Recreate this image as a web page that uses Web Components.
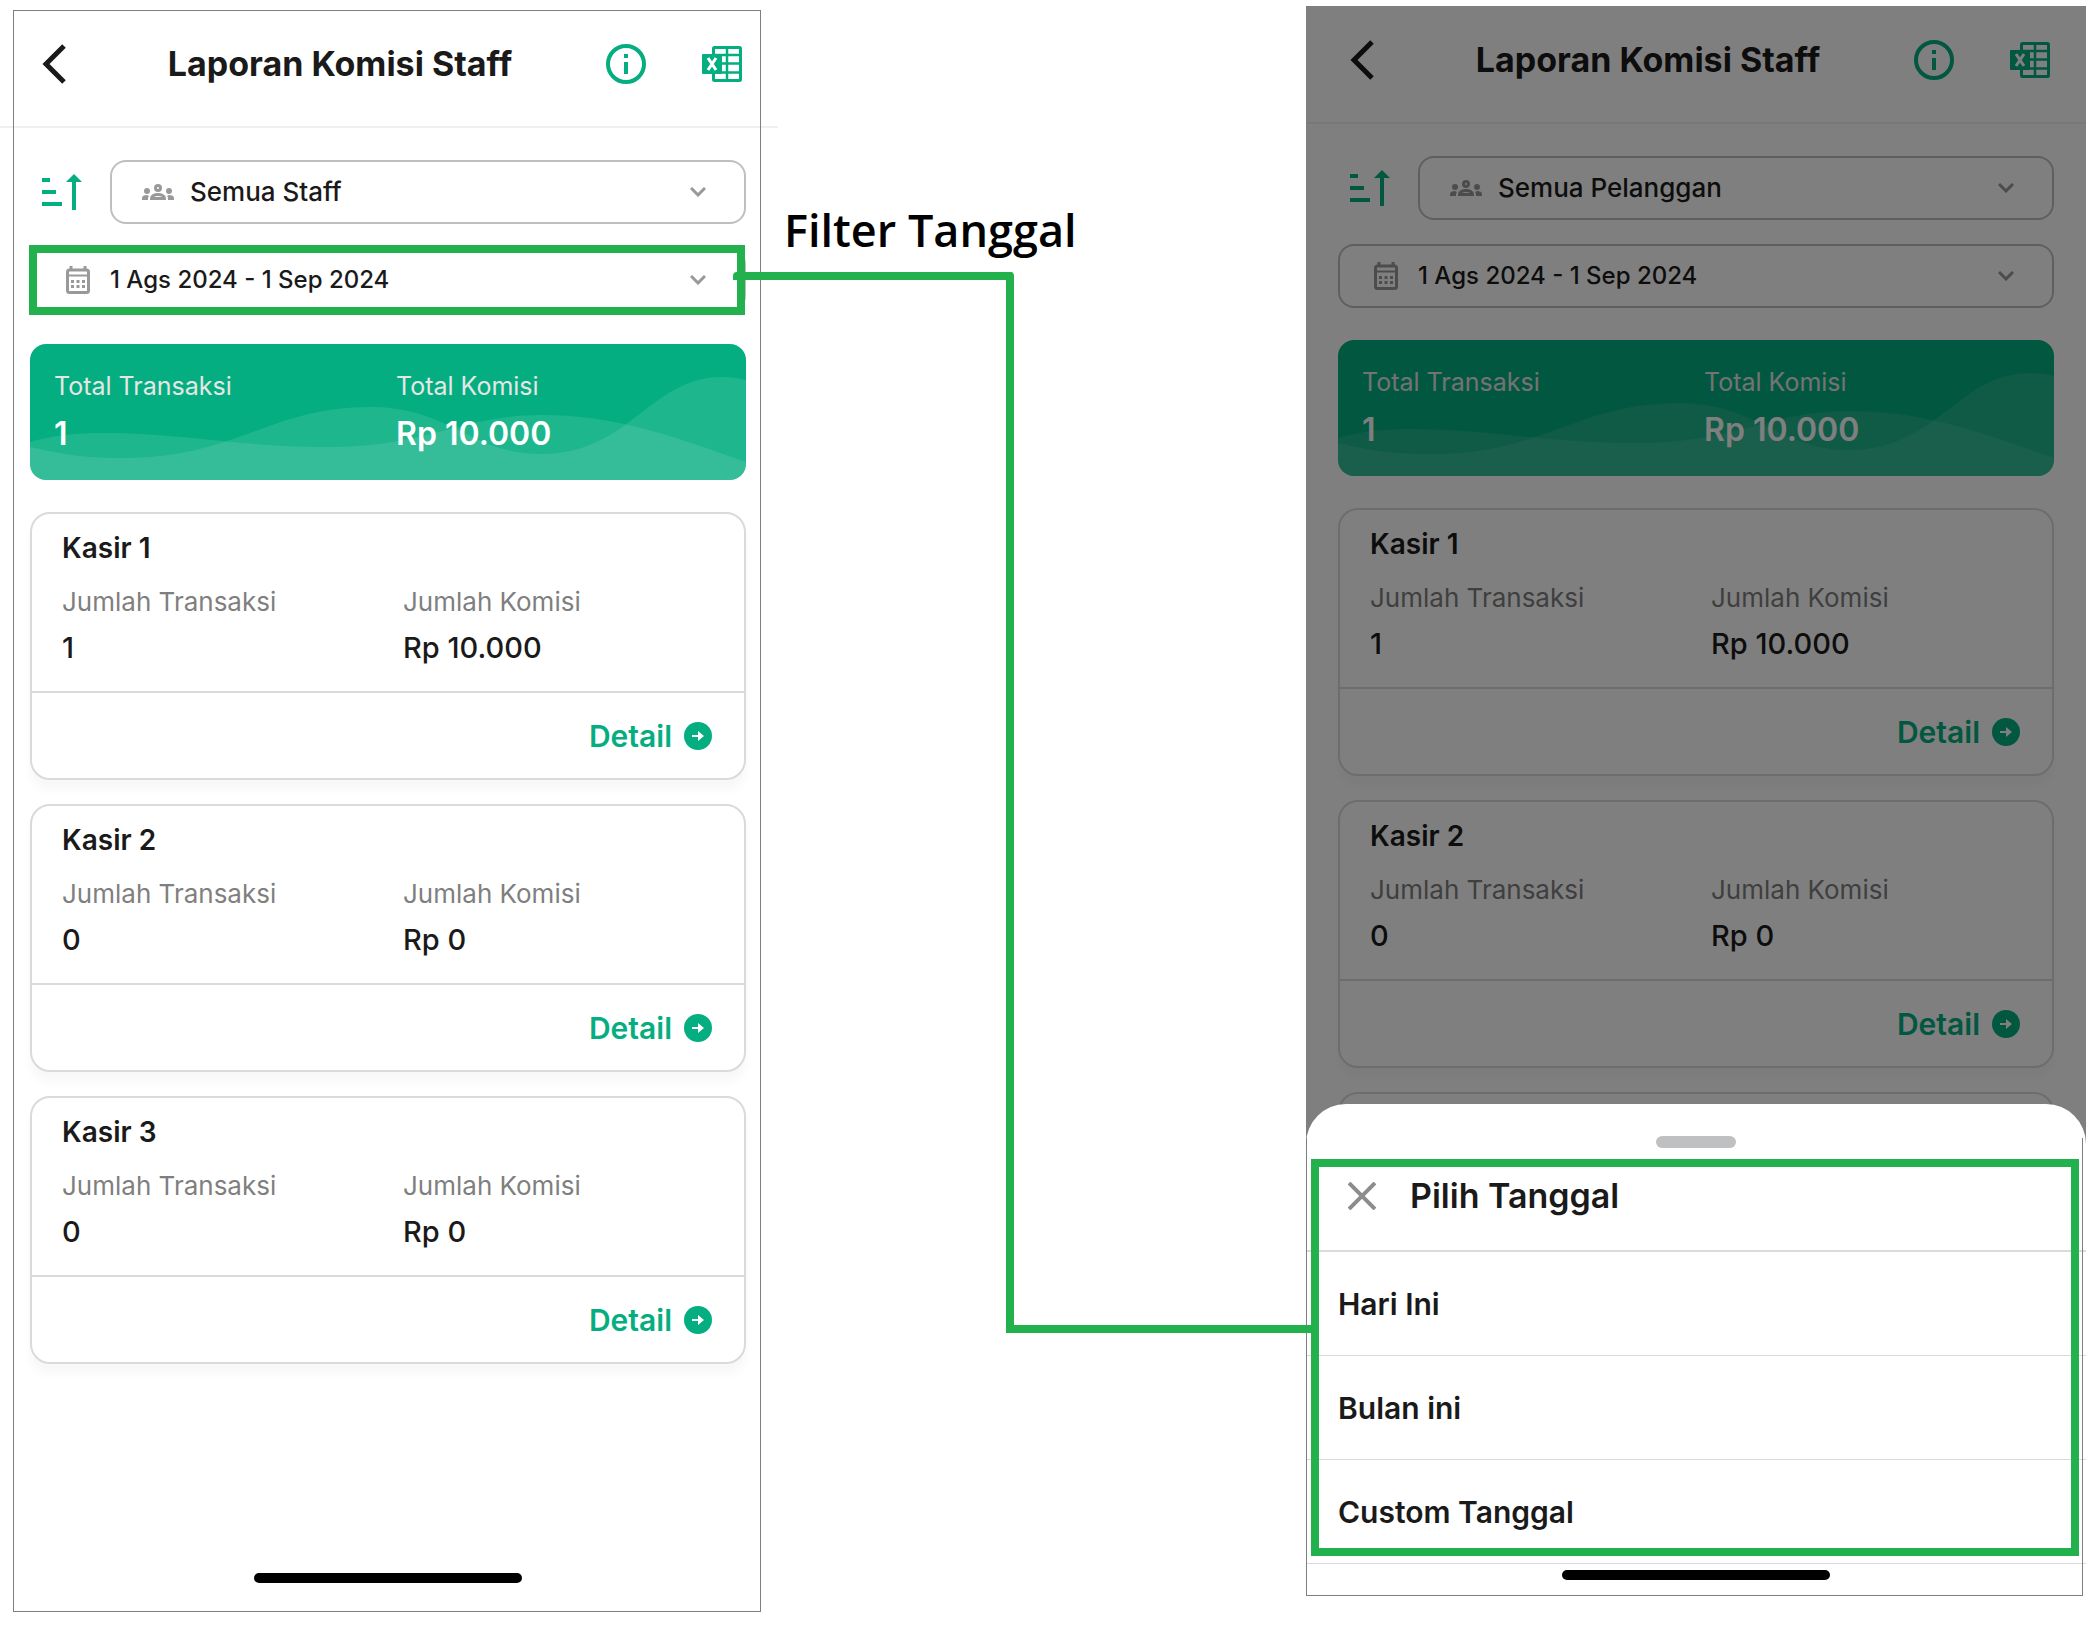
<!DOCTYPE html>
<html lang="id">
<head>
<meta charset="UTF-8">
<meta name="viewport" content="width=device-width, initial-scale=1">
<title>Laporan Komisi Staff</title>
<style>
    :root {
        --green: #05ae80;
        --marker: #22b14c;
        --ink: #1a1a1a;
        --muted: #7f7f7f;
        --icon: #999999;
        --line: #dadada;
        --field-line: #bfbfbf;
    }
    body {
        margin: 0;
        background: #fff;
        color: var(--ink);
        font-family: Inter, "Open Sans", sans-serif;
        overflow-x: hidden;
    }
</style>
</head>
<body>
<guide-board>
    <phone-screen class="before">
        <app-header heading="Laporan Komisi Staff"></app-header>
        <report-view staff="Semua Staff" date="1 Ags 2024 - 1 Sep 2024" marked>
            <staff-card name="Kasir 1" count="1" total="Rp 10.000"></staff-card>
            <staff-card name="Kasir 2" count="0" total="Rp 0"></staff-card>
            <staff-card name="Kasir 3" count="0" total="Rp 0"></staff-card>
        </report-view>
        <home-bar slot="bottom"></home-bar>
    </phone-screen>
    <guide-link>Filter Tanggal</guide-link>
    <phone-screen class="after" dimmed>
        <app-header heading="Laporan Komisi Staff"></app-header>
        <report-view staff="Semua Pelanggan" date="1 Ags 2024 - 1 Sep 2024">
            <staff-card name="Kasir 1" count="1" total="Rp 10.000"></staff-card>
            <staff-card name="Kasir 2" count="0" total="Rp 0"></staff-card>
            <staff-card></staff-card>
        </report-view>
        <date-sheet slot="sheet" heading="Pilih Tanggal">
            <sheet-option>Hari Ini</sheet-option>
            <sheet-option>Bulan ini</sheet-option>
            <sheet-option>Custom Tanggal</sheet-option>
        </date-sheet>
    </phone-screen>
</guide-board>

<script>
const ICONS = {
    back: [24, 40, `<path d="M22 2 4 20l18 18" fill="none" stroke="currentColor" stroke-width="5"/>`],
    info: [40, 40, `<circle cx="20" cy="20" r="18" fill="none" stroke="currentColor" stroke-width="4"/>
        <path d="M18 10h4v4h-4zM18 18h4v12h-4z" fill="currentColor"/>`],
    excel: [40, 36, `<rect x="11.5" y="1.5" width="27" height="33" rx="1" fill="none" stroke="currentColor" stroke-width="3"/>
        <path d="M25 1v34M11 9h28M11 17.5h28M11 26.5h28" stroke="currentColor" stroke-width="2.5"/>
        <rect y="8" width="20" height="20" rx="1" fill="currentColor"/>
        <path d="M6 12l8 12M14 12 6 24" stroke="#fff" stroke-width="3"/>`],
    sort: [40, 36, `<path d="M0 4h8v4H0zM0 16h14v4H0zM0 28h20v4H0zM30 8h4v28h-4zM24 8l8-8 8 8z" fill="currentColor"/>`],
    people: [32, 16, `<g fill="currentColor"><circle cx="5" cy="7" r="3"/><circle cx="27" cy="7" r="3"/>
        <path d="M0 16v-2c0-2 2-3 5-3l2 1c-1 1-1 2-1 4zM32 16v-2c0-2-2-3-5-3l-2 1c1 1 1 2 1 4z"/></g>
        <g fill="none" stroke="currentColor" stroke-width="3"><circle cx="16" cy="4" r="2.5"/>
        <path d="M9.5 14.5c0-2.500 3-4 6.500-4s6.500 1.500 6.500 4z"/></g>`],
    calendar: [24, 28, `<path d="M5 0v4M19 0v4" stroke="currentColor" stroke-width="3"/>
        <rect x="1.500" y="4" width="21" height="22.500" rx="2" fill="none" stroke="currentColor" stroke-width="3"/>
        <path d="M1 9.500h22" stroke="currentColor" stroke-width="2"/>
        <path d="M5 15.500h14M5 20.500h14" stroke="currentColor" stroke-width="3" stroke-dasharray="3 2.500"/>`],
    chevron: [16, 10, `<path d="M1 1l7 7 7-7" fill="none" stroke="currentColor" stroke-width="3"/>`],
    arrow: [28, 28, `<circle cx="14" cy="14" r="14" fill="currentColor"/>
        <path d="M8 13h6V9l6 5-6 5v-4H8z" fill="#fff"/>`],
    close: [28, 28, `<path d="M1 1l26 26M27 1 1 27" stroke="currentColor" stroke-width="4"/>`]
};

class AppIcon extends HTMLElement {
    constructor() {
        super();
        this.attachShadow({ mode: "open" });
    }

    connectedCallback() {
        const [w, h, body] = ICONS[this.getAttribute("name")];
        this.shadowRoot.innerHTML = `
        <style>
            :host { display: inline-flex; flex: none; }
            svg { display: block; }
        </style>
        <svg width="${w}" height="${h}" viewBox="0 0 ${w} ${h}" aria-hidden="true">${body}</svg>
        `;
    }
}

class GuideBoard extends HTMLElement {
    constructor() {
        super();
        this.attachShadow({ mode: "open" });
        this.shadowRoot.innerHTML = `
        <style>
            :host {
                display: grid;
                grid-template-columns: 390fr 264fr 390fr;
                min-height: 100vh;
                margin-left: -2px;
                padding-right: 14px;
            }
            ::slotted(.before) {
                --header-top: 44px;
                --frame: 10px 17px 0 15px;
                margin-bottom: 17px;
            }
            ::slotted(.after) {
                --header-top: 34px;
                --frame: 0 3px 0 0;
                margin: 6px 0 33px;
            }
        </style>
        <slot></slot>
        `;
    }
}

class PhoneScreen extends HTMLElement {
    constructor() {
        super();
        this.attachShadow({ mode: "open" });
        this.shadowRoot.innerHTML = `
        <style>
            :host {
                display: flex;
                flex-direction: column;
                position: relative;
                min-width: 0;
            }
            .bottom {
                margin-top: auto;
                padding-bottom: 29px;
            }
            :host([dimmed]) .bottom { display: none; }
            .dim { display: none; }
            :host([dimmed]) .dim {
                display: block;
                position: absolute;
                inset: 0 0 400px;
                background: rgba(0, 0, 0, .5);
            }
            .sheet {
                position: absolute;
                inset: auto 0 0;
            }
            .frame {
                position: absolute;
                inset: var(--frame);
                border: 1px solid var(--muted);
                pointer-events: none;
            }
        </style>
        <slot></slot>
        <div class="bottom"><slot name="bottom"></slot></div>
        <div class="dim"></div>
        <div class="frame"></div>
        <div class="sheet"><slot name="sheet"></slot></div>
        `;
    }
}

class AppHeader extends HTMLElement {
    constructor() {
        super();
        this.attachShadow({ mode: "open" });
        this.shadowRoot.innerHTML = `
        <style>
            :host {
                display: flex;
                align-items: center;
                padding: var(--header-top) 36px 42px 44px;
                border-bottom: 2px solid #f0f0f0;
            }
            button {
                display: flex;
                align-items: center;
                height: 40px;
                padding: 0;
                border: 0;
                background: none;
                color: var(--green);
            }
            .back {
                width: 32px;
                color: var(--ink);
            }
            h1 {
                flex: 1;
                margin: 0;
                font-size: 34px;
                font-weight: 700;
                line-height: 40px;
                text-align: center;
            }
            .info { margin-right: 56px; }
        </style>
        <button class="back" aria-label="Kembali"><app-icon name="back"></app-icon></button>
        <h1></h1>
        <button class="info" aria-label="Info"><app-icon name="info"></app-icon></button>
        <button aria-label="Unduh Excel"><app-icon name="excel"></app-icon></button>
        `;
    }

    connectedCallback() {
        this.shadowRoot.querySelector("h1").textContent = this.getAttribute("heading");
    }
}

class SelectField extends HTMLElement {
    constructor() {
        super();
        this.attachShadow({ mode: "open" });
    }

    connectedCallback() {
        this.shadowRoot.innerHTML = `
        <style>
            :host {
                display: block;
                flex: 1;
                position: relative;
            }
            label {
                display: flex;
                align-items: center;
                gap: 16px;
                height: 60px;
                padding: 0 38px 0 30px;
                border: 2px solid var(--field-line);
                border-radius: 16px;
                color: var(--icon);
            }
            .lead {
                display: flex;
                justify-content: center;
                width: 32px;
            }
            select {
                flex: 1;
                min-width: 0;
                padding: 0;
                border: 0;
                appearance: none;
                background: none;
                color: var(--ink);
                font: 500 var(--field-size, 26px)/32px Inter, "Open Sans", sans-serif;
            }
            /* green guide box drawn over the field */
            :host([marked])::after {
                content: "";
                position: absolute;
                inset: -3px 1px -3px -1px;
                border: 8px solid var(--marker);
                pointer-events: none;
            }
        </style>
        <label>
            <span class="lead"><app-icon name="${this.getAttribute("icon")}"></app-icon></span>
            <select aria-label="${this.getAttribute("label")}"><option>${this.getAttribute("value")}</option></select>
            <app-icon name="chevron"></app-icon>
        </label>
        `;
    }
}

class SummaryBanner extends HTMLElement {
    constructor() {
        super();
        this.attachShadow({ mode: "open" });
        this.shadowRoot.innerHTML = `
        <style>
            :host {
                display: block;
                position: relative;
                overflow: hidden;
                border-radius: 16px;
                background: var(--green);
                color: #fff;
            }
            svg {
                position: absolute;
                inset: 0;
                width: 100%;
                height: 100%;
            }
            dl {
                display: grid;
                grid-template-columns: 1fr 1fr;
                position: relative;
                margin: 0;
                padding: 26px 8px 28px 24px;
            }
            dt {
                margin-bottom: 14px;
                color: #e6e6e6;
                font-size: 25px;
                line-height: 32px;
            }
            dd {
                margin: 0;
                font-size: 32px;
                font-weight: 600;
                line-height: 36px;
            }
        </style>
        <svg viewBox="0 0 716 136" preserveAspectRatio="none" fill="#fff" fill-opacity=".1" aria-hidden="true">
            <path d="M0 103C40 112 60 114 95 114C205 114 240 63 340 63C420 63 440 110 511 110C600 110 620 33 692 33Q706 33 716 36V136H0z"/>
            <path d="M0 98C25 91 45 89 75 89C150 89 210 103 297 103C400 103 430 71 511 71C590 71 650 95 716 118V136H0z"/>
        </svg>
        <dl>
            <div><dt>Total Transaksi</dt><dd>1</dd></div>
            <div><dt>Total Komisi</dt><dd>Rp 10.000</dd></div>
        </dl>
        `;
    }
}

class StaffCard extends HTMLElement {
    constructor() {
        super();
        this.attachShadow({ mode: "open" });
    }

    connectedCallback() {
        const style = `
        <style>
            :host {
                display: block;
                min-height: 80px;
                border: 2px solid var(--line);
                border-radius: 20px;
                box-shadow: 0 10px 10px rgba(0, 0, 0, .03);
            }
            h2 {
                margin: 0;
                padding: 18px 30px 22px;
                font-size: 28px;
                font-weight: 600;
                line-height: 32px;
            }
            dl {
                display: grid;
                grid-template-columns: 1fr 1fr;
                margin: 0;
                padding: 0 0 27px 30px;
                border-bottom: 2px solid var(--line);
                line-height: 32px;
            }
            dt {
                margin-bottom: 14px;
                color: var(--muted);
                font-size: 26px;
            }
            dd {
                margin: 0;
                font-size: 29px;
                font-weight: 500;
            }
            a {
                display: flex;
                align-items: center;
                justify-content: flex-end;
                gap: 12px;
                height: 85px;
                padding-right: 32px;
                color: var(--green);
                font-size: 30px;
                font-weight: 600;
                text-decoration: none;
            }
        </style>
        `;

        // a card without a name is an empty placeholder
        if (!this.hasAttribute("name")) {
            this.shadowRoot.innerHTML = style;
            return;
        }

        this.shadowRoot.innerHTML = `${style}
        <h2>${this.getAttribute("name")}</h2>
        <dl>
            <div><dt>Jumlah Transaksi</dt><dd>${this.getAttribute("count")}</dd></div>
            <div><dt>Jumlah Komisi</dt><dd>${this.getAttribute("total")}</dd></div>
        </dl>
        <a href="#">Detail<app-icon name="arrow"></app-icon></a>
        `;
    }
}

class ReportView extends HTMLElement {
    constructor() {
        super();
        this.attachShadow({ mode: "open" });
    }

    connectedCallback() {
        const marked = this.hasAttribute("marked") ? "marked" : "";
        this.shadowRoot.innerHTML = `
        <style>
            :host {
                display: flex;
                flex-direction: column;
                gap: 24px;
                padding: 32px 32px 0;
            }
            .row {
                display: flex;
                align-items: center;
                gap: 28px;
            }
            .row button {
                display: flex;
                padding: 0 0 0 12px;
                border: 0;
                background: none;
                color: var(--green);
            }
            .date {
                --field-size: 24px;
                display: flex;
            }
            summary-banner { margin: 8px 0; }
        </style>
        <div class="row">
            <button aria-label="Urutkan"><app-icon name="sort"></app-icon></button>
            <select-field icon="people" label="Staff" value="${this.getAttribute("staff")}"></select-field>
        </div>
        <div class="date">
            <select-field icon="calendar" label="Tanggal" value="${this.getAttribute("date")}" ${marked}></select-field>
        </div>
        <summary-banner></summary-banner>
        <slot></slot>
        `;
    }
}

class HomeBar extends HTMLElement {
    constructor() {
        super();
        this.attachShadow({ mode: "open" });
        this.shadowRoot.innerHTML = `
        <style>
            :host {
                display: block;
                width: 268px;
                height: 10px;
                margin: 0 auto;
                border-radius: 5px;
                background: #000;
            }
        </style>
        `;
    }
}

class SheetOption extends HTMLElement {
    constructor() {
        super();
        this.attachShadow({ mode: "open" });
        this.shadowRoot.innerHTML = `
        <style>
            :host {
                display: block;
                border-bottom: 1px solid var(--line);
            }
            button {
                width: 100%;
                height: 103px;
                padding: 0 32px;
                border: 0;
                background: none;
                color: var(--ink);
                font: 600 30px/32px Inter, "Open Sans", sans-serif;
                text-align: left;
            }
        </style>
        <button><slot></slot></button>
        `;
    }
}

class DateSheet extends HTMLElement {
    constructor() {
        super();
        this.attachShadow({ mode: "open" });
        this.shadowRoot.innerHTML = `
        <style>
            :host {
                display: block;
                position: relative;
                padding: 32px 0 16px;
                border-radius: 40px 40px 0 0;
                background: #fff;
            }
            .grip {
                width: 80px;
                height: 12px;
                margin: 0 auto;
                border-radius: 6px;
                background: #bfc0c2;
            }
            header {
                display: flex;
                align-items: center;
                gap: 34px;
                padding: 28px 42px 34px;
                border-bottom: 2px solid var(--line);
            }
            header button {
                display: flex;
                padding: 0;
                border: 0;
                background: none;
                color: #8c8c8c;
            }
            h2 {
                margin: 0;
                font-size: 34px;
                font-weight: 600;
                line-height: 40px;
            }
            home-bar { margin-top: 6px; }
            .edge {
                position: absolute;
                inset: 34px 3px 0 0;
                border: 1px solid var(--muted);
                border-top: 0;
            }
            .marker {
                position: absolute;
                inset: 55px 7px 40px 5px;
                border: 8px solid var(--marker);
            }
            .edge, .marker { pointer-events: none; }
        </style>
        <div class="grip"></div>
        <header>
            <button aria-label="Tutup"><app-icon name="close"></app-icon></button>
            <h2></h2>
        </header>
        <slot></slot>
        <home-bar></home-bar>
        <div class="edge"></div>
        <div class="marker"></div>
        `;
    }

    connectedCallback() {
        this.shadowRoot.querySelector("h2").textContent = this.getAttribute("heading");
    }
}

// caption and the elbow line from the date field to the sheet
class GuideLink extends HTMLElement {
    constructor() {
        super();
        this.attachShadow({ mode: "open" });
        this.shadowRoot.innerHTML = `
        <style>
            :host {
                display: block;
                position: relative;
                z-index: 1;
                padding: 200px 0 0 6px;
                color: #000;
                font: 600 45px/60px "Open Sans", sans-serif;
                white-space: nowrap;
            }
            .out, .in {
                position: absolute;
                box-sizing: border-box;
                border: 0 solid var(--marker);
            }
            .out {
                top: 272px;
                bottom: 296px;
                left: -45px;
                right: 292px;
                border-width: 8px 8px 0 0;
                border-radius: 4px 4px 0 0;
            }
            .in {
                bottom: 296px;
                left: 228px;
                right: -6px;
                border-bottom-width: 8px;
                border-radius: 0 0 0 4px;
                height: 8px;
            }
        </style>
        <slot></slot>
        <div class="out"></div>
        <div class="in"></div>
        `;
    }
}

customElements.define("app-icon", AppIcon);
customElements.define("guide-board", GuideBoard);
customElements.define("phone-screen", PhoneScreen);
customElements.define("app-header", AppHeader);
customElements.define("select-field", SelectField);
customElements.define("summary-banner", SummaryBanner);
customElements.define("staff-card", StaffCard);
customElements.define("report-view", ReportView);
customElements.define("home-bar", HomeBar);
customElements.define("sheet-option", SheetOption);
customElements.define("date-sheet", DateSheet);
customElements.define("guide-link", GuideLink);
</script>
</body>
</html>
